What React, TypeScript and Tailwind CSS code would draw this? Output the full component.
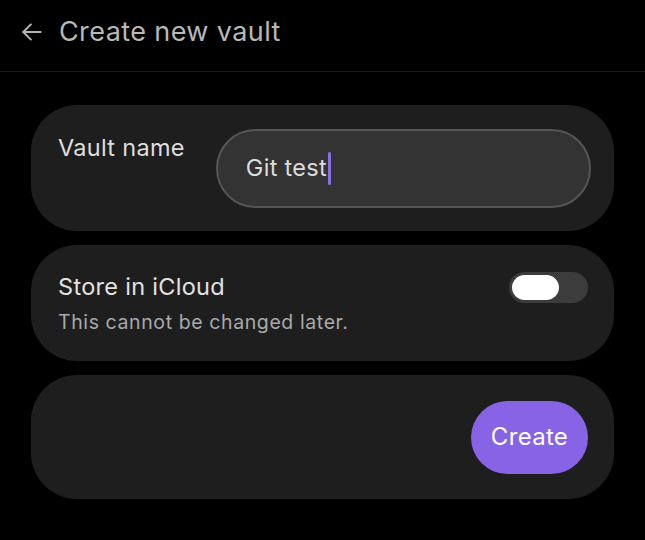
import { useState } from "react";

export default function App() {
  const [name] = useState("Git test");
  const [icloud, setIcloud] = useState(false);

  return (
    <div
      className="min-h-screen w-full bg-black text-white"
      style={{ fontFamily: "Inter, 'Noto Sans', sans-serif" }}
    >
      <header className="flex h-[72px] items-center gap-[14px] border-b border-[#1a1a1a] px-[19px] pb-[7px]">
        <svg
          viewBox="0 0 24 24"
          className="h-[26px] w-[26px] text-[#b5b5b5]"
          fill="none"
          stroke="currentColor"
          strokeWidth={1.8}
          strokeLinecap="round"
          strokeLinejoin="round"
        >
          <path d="M20 12H4" />
          <path d="M11 5l-7 7 7 7" />
        </svg>
        <h1 className="text-[27px] font-normal tracking-[0.4px] text-[#b8b8b8]">
          Create new vault
        </h1>
      </header>

      <main className="flex flex-col gap-[14px] px-[31px] pt-[33px]">
        <section className="flex h-[126px] items-center gap-[31px] rounded-[46px] bg-[#1e1e1e] pl-[27px] pr-[23px]">
          <label className="mb-[40px] shrink-0 text-[23.5px] tracking-[0.3px] text-[#dedede]">
            Vault name
          </label>
          <div className="flex h-[79px] flex-1 items-center rounded-full border-[2.5px] border-[#555555] bg-[#333333] pl-[28px]">
            <span className="text-[23.5px] tracking-[0.3px] text-[#dcdcdc]">
              {name}
            </span>
            <span className="ml-[1px] h-[33px] w-[3px] rounded-sm bg-[#8b6fe3]" />
          </div>
        </section>

        <section className="flex h-[116px] items-start justify-between rounded-[46px] bg-[#1e1e1e] pl-[27px] pr-[26px] pt-[27px]">
          <div className="flex flex-col gap-[7px]">
            <span className="text-[23.5px] leading-[30px] tracking-[0.3px] text-[#e2e2e2]">
              Store in iCloud
            </span>
            <span className="text-[19.5px] leading-[26px] tracking-[0.6px] text-[#a9a9a9]">
              This cannot be changed later.
            </span>
          </div>
          <button
            onClick={() => setIcloud(!icloud)}
            className="flex h-[31px] w-[79px] items-center rounded-full bg-[#3c3c3c] p-[3px]"
          >
            <span className="h-[25px] w-[47px] rounded-full bg-white" />
          </button>
        </section>

        <section className="flex h-[124px] items-center justify-end rounded-[46px] bg-[#1e1e1e] pr-[26px]">
          <button className="flex h-[73px] w-[117px] items-center justify-center rounded-full bg-[#8763e6] text-[24px] tracking-[0.3px] text-white">
            Create
          </button>
        </section>
      </main>
    </div>
  );
}
